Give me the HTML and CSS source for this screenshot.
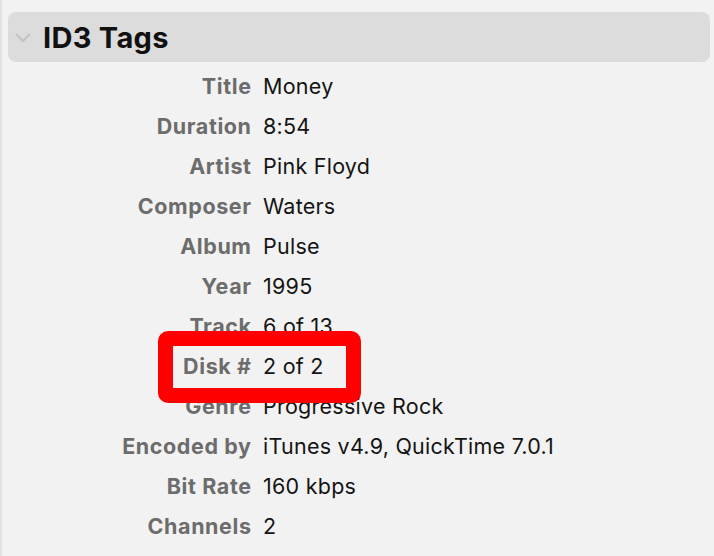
FILE: index.html
```html
<!DOCTYPE html>
<html>
<head>
<meta charset="utf-8">
<link rel="stylesheet" href="styles.css">
</head>
<body>
<div class="panel">
  <div class="section-header">
    <svg class="chevron" width="16" height="10" viewBox="0 0 16 10"><path d="M1.5 1.5 L8 8 L14.5 1.5" fill="none" stroke="#c2c2c2" stroke-width="2" stroke-linecap="round" stroke-linejoin="round"/></svg>
    <span class="section-title">ID3 Tags</span>
  </div>
  <div class="tags">
    <div class="label">Title</div><div class="value">Money</div>
    <div class="label">Duration</div><div class="value">8:54</div>
    <div class="label">Artist</div><div class="value">Pink Floyd</div>
    <div class="label">Composer</div><div class="value">Waters</div>
    <div class="label">Album</div><div class="value">Pulse</div>
    <div class="label">Year</div><div class="value">1995</div>
    <div class="label">Track</div><div class="value">6 of 13</div>
    <div class="label">Disk #</div><div class="value">2 of 2</div>
    <div class="label">Genre</div><div class="value">Progressive Rock</div>
    <div class="label">Encoded by</div><div class="value">iTunes v4.9, QuickTime 7.0.1</div>
    <div class="label">Bit Rate</div><div class="value">160 kbps</div>
    <div class="label">Channels</div><div class="value">2</div>
    <div class="highlight"></div>
  </div>
</div>
</body>
</html>
```
FILE: styles.css
```css
html, body {
  margin: 0;
  padding: 0;
  background: #f2f2f2;
}
body {
  width: 714px;
  height: 556px;
  overflow: hidden;
  border-left: 2px solid #e3e3e3;
  box-sizing: border-box;
  font-family: Inter, "Liberation Sans", sans-serif;
}
.panel {
  padding: 12px 4px 0 6px;
}
.section-header {
  display: flex;
  align-items: center;
  height: 50px;
  background: #dcdcdc;
  border-radius: 8px;
  padding-left: 7px;
  box-sizing: border-box;
}
.chevron {
  display: block;
  margin-top: 2px;
}
.section-title {
  margin-left: 12px;
  font-size: 29px;
  font-weight: 700;
  color: #111;
  letter-spacing: 0.3px;
}
.tags {
  position: relative;
  display: grid;
  grid-template-columns: 243px auto;
  column-gap: 12px;
  grid-auto-rows: 40px;
  margin-top: 4px;
  font-size: 21.5px;
  line-height: 40px;
}
.label {
  text-align: right;
  font-weight: 700;
  color: #6c6c6c;
  letter-spacing: 0.6px;
  margin-right: -0.6px;
}
.value {
  color: #141414;
  letter-spacing: 0.25px;
}
.highlight {
  position: absolute;
  left: 150px;
  top: 265px;
  width: 203px;
  height: 72px;
  box-sizing: border-box;
  border: 15px solid #ff0000;
  border-radius: 10px;
}
```
